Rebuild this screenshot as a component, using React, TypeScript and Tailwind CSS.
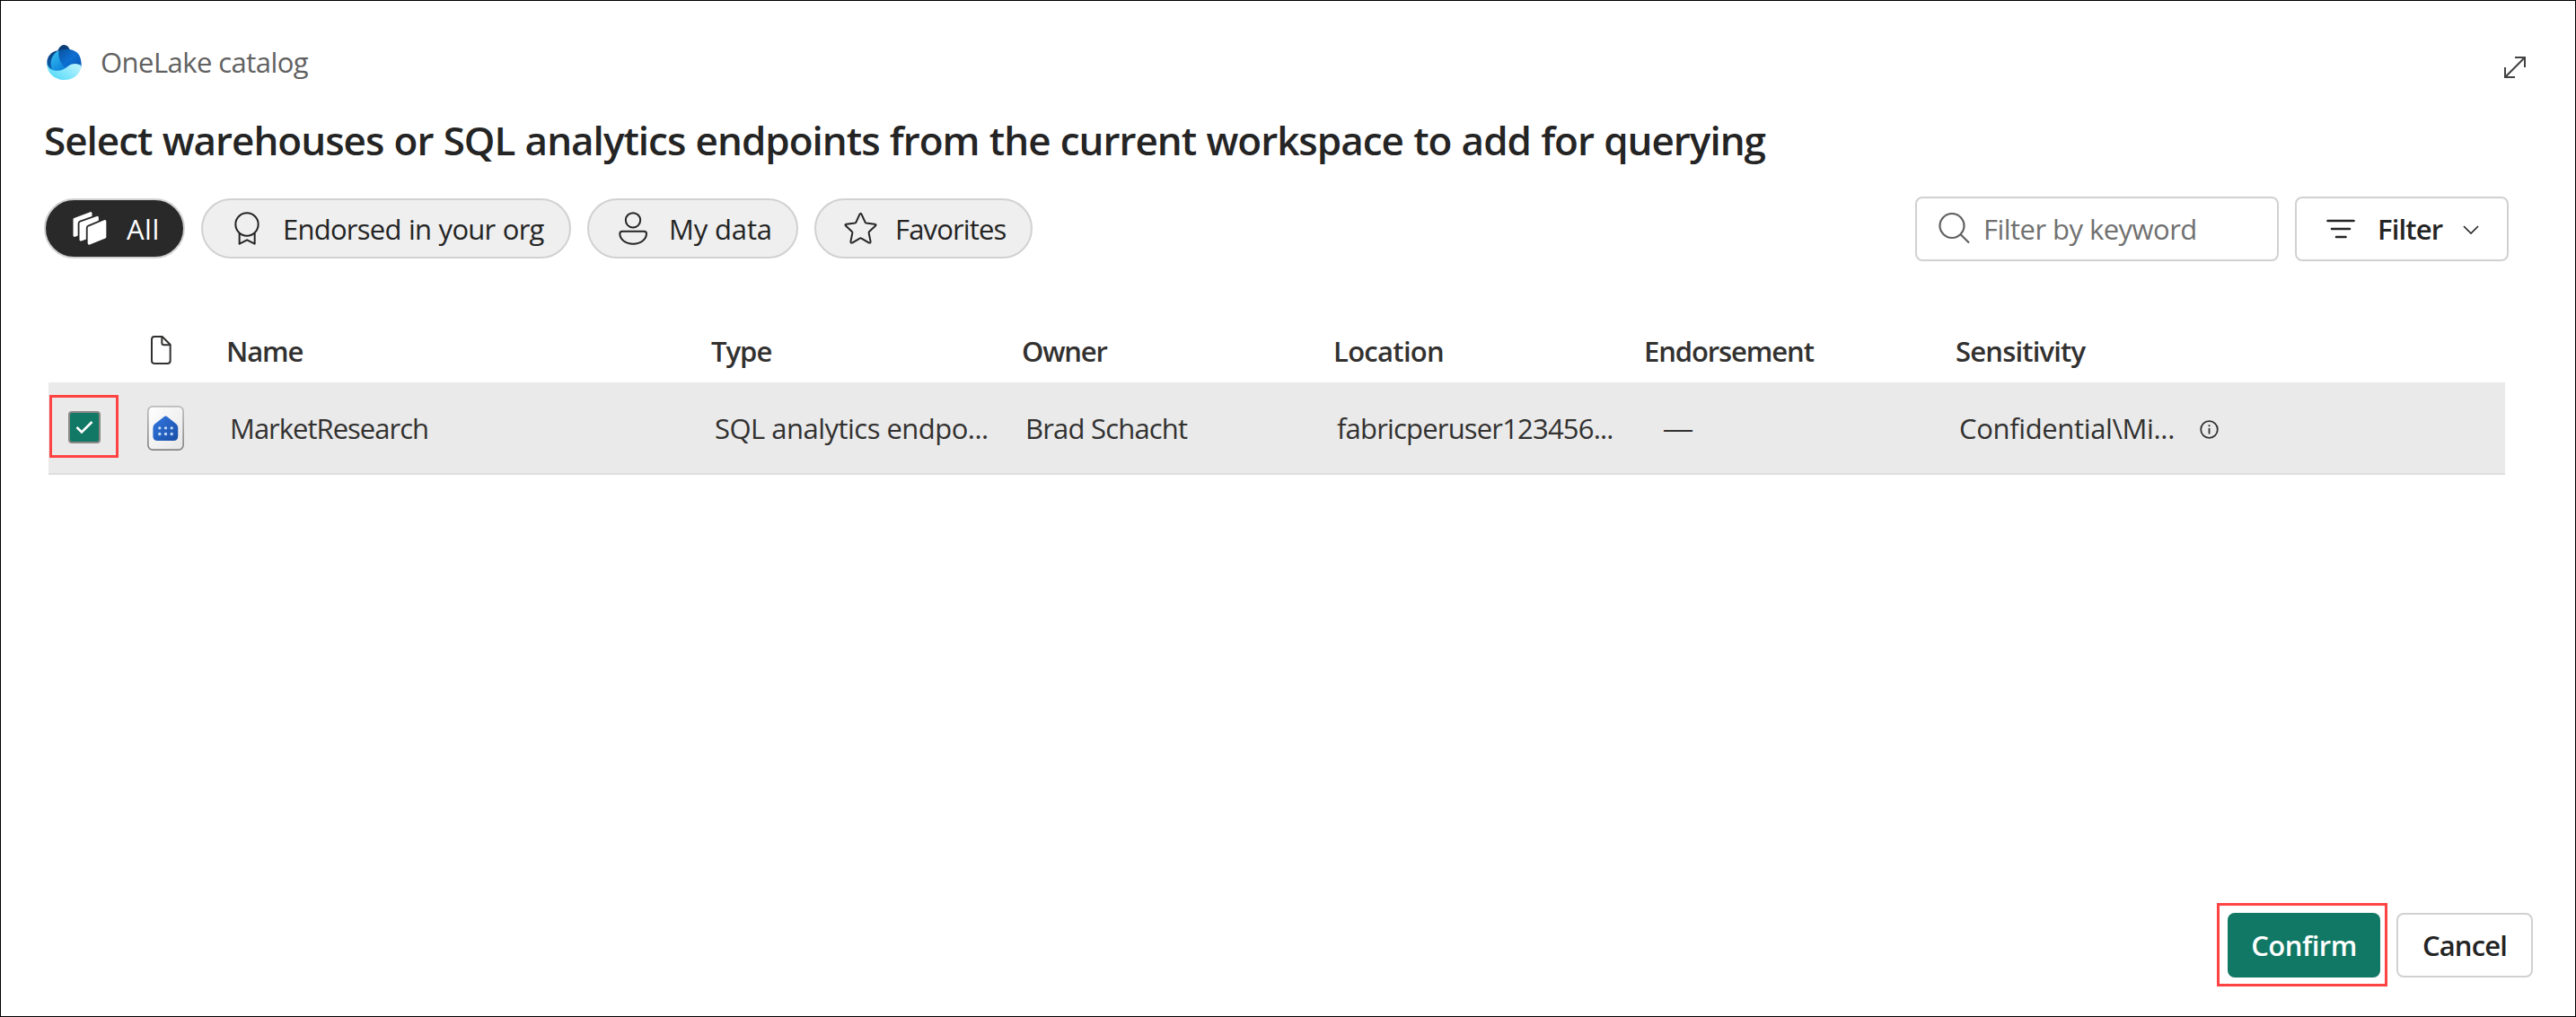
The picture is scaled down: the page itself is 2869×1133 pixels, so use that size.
import type { ReactNode } from "react";

function OneLakeLogo() {
  return (
    <svg className="h-[39px] w-[39px] shrink-0" viewBox="36 26 118 118" fill="none">
      <defs>
        <linearGradient id="ol-navy" x1="70" y1="40" x2="50" y2="115" gradientUnits="userSpaceOnUse">
          <stop stopColor="#0a3a73" />
          <stop offset="1" stopColor="#0b62b4" />
        </linearGradient>
        <linearGradient id="ol-blue" x1="85" y1="45" x2="140" y2="105" gradientUnits="userSpaceOnUse">
          <stop stopColor="#0b57a8" />
          <stop offset="0.5" stopColor="#0d70d2" />
          <stop offset="1" stopColor="#0a5ab8" />
        </linearGradient>
        <linearGradient id="ol-petal" x1="55" y1="60" x2="95" y2="112" gradientUnits="userSpaceOnUse">
          <stop stopColor="#2fb6ee" />
          <stop offset="1" stopColor="#0b7fd8" />
        </linearGradient>
        <linearGradient id="ol-wave" x1="120" y1="90" x2="85" y2="144" gradientUnits="userSpaceOnUse">
          <stop stopColor="#b0f1fd" />
          <stop offset="1" stopColor="#63ddf9" />
        </linearGradient>
      </defs>
      <path d="M72 48C78 33 86 26 95 26C104 26 110 33 115 44L90 60Z" fill="#0a3d78" />
      <path d="M76 45C50 48 37 66 37 86C37 100 44 112 62 122L80 90Z" fill="url(#ol-navy)" />
      <path d="M70 50C93 36 122 38 138 52C149 62 153 76 153 100L108 122L76 100Z" fill="url(#ol-blue)" />
      <path d="M77 44C60 54 50 70 50 90C51 106 56 118 70 124L108 112C90 100 72 74 77 44Z" fill="url(#ol-petal)" />
      <path
        d="M37 88C40 104 56 115 76 113C98 111 106 96 120 91C134 87 146 91 153 96C150 124 126 144 96 144C62 144 36 120 37 88Z"
        fill="url(#ol-wave)"
      />
    </svg>
  );
}

function StackIcon() {
  return (
    <svg className="h-[37px] w-[38px] shrink-0" viewBox="125 588 114 111" strokeLinejoin="round">
      <path d="M131 613L185 593V648L131 667Z" fill="#fff" stroke="#fff" strokeWidth="9" />
      <path d="M152 627L207 607V662L152 681Z" fill="#292929" stroke="#292929" strokeWidth="20" />
      <path d="M152 627L207 607V662L152 681Z" fill="#fff" stroke="#fff" strokeWidth="9" />
      <path d="M180 642L232 620V672L180 693Z" fill="#292929" stroke="#292929" strokeWidth="21" />
      <path d="M180 642L232 620V672L180 693Z" fill="#fff" stroke="#fff" strokeWidth="10" />
    </svg>
  );
}

function AwardIcon() {
  return (
    <svg className="h-[37px] w-[28px] shrink-0" viewBox="664 588 84 111" fill="none" stroke="#242424" strokeWidth="6" strokeLinejoin="round">
      <circle cx="706" cy="630" r="38" />
      <path d="M681 660V695L706.5 682L732 695V660" />
    </svg>
  );
}

function PersonIcon() {
  return (
    <svg className="h-[37px] w-[32px] shrink-0" viewBox="148 63 96 111" fill="none" stroke="#242424" strokeWidth="6">
      <circle cx="196" cy="91" r="24.5" />
      <path d="M160 128H233Q241 128 241 136C241 156 221 170 196.500 170S152 156 152 136Q152 128 160 128Z" />
    </svg>
  );
}

function StarIcon() {
  return (
    <svg className="h-[37px] w-[37px] shrink-0" viewBox="899.500 64 111 111" fill="none" stroke="#242424" strokeWidth="6" strokeLinejoin="round">
      <path d="M952 72Q955 66 958 72L970 98Q971 101 974 101.500L1002 105Q1009 106.500 1004 111L984 130Q982 132 982.500 135L988 162Q989 170 982 167L958 153Q955 151 952 153L928 167Q921 170 922 162L927.500 135Q928 132 926 130L906 111Q901 106.500 908 105L936 101.500Q939 101 940 98Z" />
    </svg>
  );
}

function Pill({ icon, children, className }: { icon: ReactNode; children: ReactNode; className: string }) {
  return <button className={`flex h-[67px] items-center whitespace-nowrap rounded-full border-2 border-[#d1d1d1] ${className}`}>{icon}{children}</button>;
}

const COLUMNS = "grid grid-cols-[110px_88px_540px_346px_347px_346px_347px_1fr] items-center";

export default function App() {
  return (
    <div className="flex h-[1133px] w-[2869px] flex-col border border-black bg-white font-['Open_Sans','Noto_Sans',sans-serif] text-[31px] leading-[40px] text-[#242424]">
      <header className="mt-[48px] flex h-[40px] items-center pl-[51px]">
        <OneLakeLogo />
        <span className="ml-[20px] pl-px tracking-[-0.55px] text-[#616161]">OneLake catalog</span>
        <svg className="mr-[54px] ml-auto mt-[12px] h-[26px] w-[26px]" viewBox="0 0 26 26" fill="none" stroke="#424242" strokeWidth="2">
          <path d="M13 2H24V13M2 13V24H13M2 24L24 2" />
        </svg>
      </header>

      <h1 className="mt-[37px] pl-[48px] text-[44px] leading-[60px] font-semibold tracking-[-1px] [word-spacing:0.8px]">
        Select warehouses or SQL analytics endpoints from the current workspace to add for querying
      </h1>

      <div className="mt-[33px] flex h-[72px] items-center pr-[74px] pl-[48px]">
        <div className="-mt-[2px] flex gap-[18px]">
          <Pill className="w-[157px] bg-[#292929] pl-[30px] text-white" icon={<StackIcon />}>
            <span className="mt-[2px] ml-[22px] tracking-[0.5px]">All</span>
          </Pill>
          <Pill className="w-[412px] bg-[#efefef] pl-[35px]" icon={<AwardIcon />}>
            <span className="mt-[2px] ml-[26px] tracking-[-0.75px] [word-spacing:1px]">Endorsed in your org</span>
          </Pill>
          <Pill className="w-[235px] bg-[#efefef] pl-[33px]" icon={<PersonIcon />}>
            <span className="mt-[2px] ml-[24px] tracking-[-0.15px]">My data</span>
          </Pill>
          <Pill className="w-[243px] bg-[#efefef] pl-[31px]" icon={<StarIcon />}>
            <span className="mt-[2px] ml-[20px] tracking-[-0.85px]">Favorites</span>
          </Pill>
        </div>
        <div className="ml-auto flex h-[72px] w-[405px] items-center rounded-lg border-2 border-[#d1d1d1] pl-[23px]">
          <svg className="h-[36px] w-[36px]" viewBox="0 0 36 36" fill="none" stroke="#616161" strokeWidth="2.200">
            <circle cx="16" cy="14.500" r="13.500" />
            <path d="M25.500 24L35 33.500" />
          </svg>
          <span className="ml-[15px] tracking-[-0.54px] text-[#707070]">Filter by keyword</span>
        </div>
        <button className="ml-[18px] flex h-[72px] w-[238px] items-center rounded-lg border-2 border-[#d1d1d1] pl-[33px]">
          <svg className="h-[22px] w-[32px]" viewBox="0 0 32 22" fill="none" stroke="#242424" strokeWidth="2.600" strokeLinecap="round">
            <path d="M1.500 2H30.500M6 11H26M11 20H21.500" />
          </svg>
          <span className="ml-[25px] font-semibold tracking-[-0.85px]">Filter</span>
          <svg className="mt-[1px] ml-[23px] h-[10px] w-[18px]" viewBox="0 0 18 10" fill="none" stroke="#242424" strokeWidth="1.600">
            <path d="M1 1L9 9L17 1" />
          </svg>
        </button>
      </div>

      <section className="mt-[63px] mr-[78px] ml-[53px] text-[#323130]">
        <div className={`${COLUMNS} h-[72px] pt-[2px] font-semibold`}>
          <span />
          <svg className="-mt-[2px] ml-[4px] h-[32px] w-[23px]" viewBox="354 27 69 96" fill="none" stroke="#323130" strokeWidth="6" strokeLinejoin="round">
            <path d="M366 30H392L419 57V110Q419 120 409 120H368Q357 120 357 110V40Q357 30 366 30Z" />
            <path d="M391 31V51Q391 58 398 58H418" />
          </svg>
          <span className="tracking-[-1.1px]">Name</span>
          <span className="tracking-[-1px]">Type</span>
          <span className="tracking-[-1.2px]">Owner</span>
          <span className="tracking-[-0.7px]">Location</span>
          <span className="tracking-[-1.1px]">Endorsement</span>
          <span className="tracking-[-0.82px]">Sensitivity</span>
        </div>
        <div className={`${COLUMNS} h-[103px] border-b-2 border-[#dedede] bg-[#eaeaea]`}>
          <div className="-mt-[3px] ml-[1px] flex h-[70px] w-[77px] items-center justify-center border-3 border-[#ff4343]">
            <span className="mt-[2px] flex h-[36px] w-[36px] items-center justify-center rounded-[4px] border-2 border-[#8a8886] bg-[#117865]">
              <svg className="h-[16px] w-[20px]" viewBox="0 0 20 16" fill="none" stroke="#fff" strokeWidth="2.600">
                <path d="M1.500 8L7 13.500L18.500 2" />
              </svg>
            </span>
          </div>
          <svg className="h-[50px] w-[41px]" viewBox="341 262 122 149">
            <defs>
              <linearGradient id="card-edge" x1="0" y1="0" x2="0" y2="1">
                <stop stopColor="#bcbcbc" />
                <stop offset="1" stopColor="#858585" />
              </linearGradient>
              <linearGradient id="card-fill" x1="0" y1="0" x2="1" y2="1">
                <stop stopColor="#ffffff" />
                <stop offset="1" stopColor="#e6e6e6" />
              </linearGradient>
              <linearGradient id="house-fill" x1="0" y1="0" x2="1" y2="1">
                <stop stopColor="#3377e0" />
                <stop offset="1" stopColor="#1a4ea6" />
              </linearGradient>
            </defs>
            <rect x="343.500" y="264.500" width="117" height="144" rx="16" fill="url(#card-fill)" stroke="url(#card-edge)" strokeWidth="5" />
            <path d="M396 299Q402 294 408 299L437 322Q443 327 443 335V363Q443 378 428 378H375Q360 378 360 363V335Q360 327 366 322Z" fill="url(#house-fill)" />
            <g fill="#c3dbfb">
              <circle cx="382" cy="336" r="5" />
              <circle cx="402" cy="336" r="5" />
              <circle cx="422" cy="336" r="5" />
              <circle cx="382" cy="356" r="5" />
              <circle cx="402" cy="356" r="5" />
              <circle cx="422" cy="356" r="5" />
            </g>
          </svg>
          <span className="pl-[4px] tracking-[-1px]">MarketResearch</span>
          <span className="pl-[4px] tracking-[-0.52px]">SQL analytics endpo...</span>
          <span className="pl-[4px] tracking-[-0.8px]">Brad Schacht</span>
          <span className="pl-[4px] tracking-[-0.82px]">fabricperuser123456...</span>
          <span className="pl-[22px] font-['Liberation_Sans',sans-serif] text-[32px]">—</span>
          <span className="flex items-center pl-[4px]">
            <span className="tracking-[-0.35px]">Confidential\Mi...</span>
            <svg className="mt-[3px] ml-[28px] h-[21px] w-[21px]" viewBox="0 0 21 21" fill="none" stroke="#323130" strokeWidth="1.800">
              <circle cx="10.500" cy="10.500" r="9.300" />
              <path d="M10.500 9V15.500M10.500 5.300V7.300" />
            </svg>
          </span>
        </div>
      </section>

      <footer className="mt-auto mr-[47px] mb-[33px] flex items-center justify-end gap-[10px] font-semibold">
        <div className="h-[93px] w-[190px] border-3 border-[#ff4343] pt-[8px] pl-[9px]">
          <button className="h-[72px] w-[170px] rounded-lg bg-[#117865] tracking-[-0.5px] text-white">Confirm</button>
        </div>
        <button className="h-[72px] w-[152px] rounded-lg border-2 border-[#d1d1d1] tracking-[-0.83px]">Cancel</button>
      </footer>
    </div>
  );
}
